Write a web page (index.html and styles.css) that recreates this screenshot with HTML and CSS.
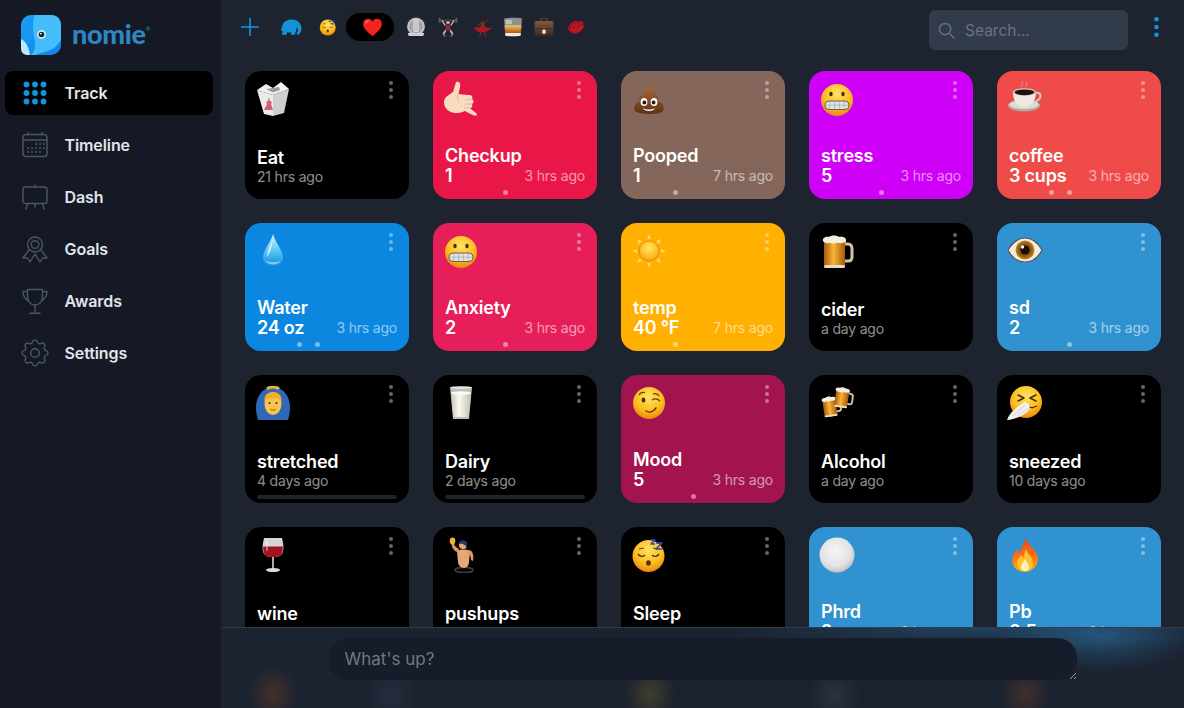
FILE: index.html
```html
<!DOCTYPE html>
<html lang="en">
<head>
<meta charset="utf-8">
<title>Nomie</title>
<link rel="stylesheet" href="styles.css">
</head>
<body>
<svg class="defs" width="0" height="0" aria-hidden="true">
  <defs>
    <radialGradient id="g-face" cx=".5" cy=".32" r=".72"><stop offset="0" stop-color="#ffe266"/><stop offset=".6" stop-color="#fbbd1c"/><stop offset="1" stop-color="#e97d10"/></radialGradient>
    <linearGradient id="g-poop" x1="0" y1="0" x2="0" y2="1"><stop offset="0" stop-color="#a9683a"/><stop offset="1" stop-color="#5e3216"/></linearGradient>
    <linearGradient id="g-drop" x1="0" y1="0" x2="0" y2="1"><stop offset="0" stop-color="#d5f3ff"/><stop offset=".55" stop-color="#4fc0f5"/><stop offset="1" stop-color="#0b7fd8"/></linearGradient>
    <radialGradient id="g-sun" cx=".5" cy=".35" r=".7"><stop offset="0" stop-color="#ffe566"/><stop offset=".7" stop-color="#fbb91e"/><stop offset="1" stop-color="#e98a0c"/></radialGradient>
    <linearGradient id="g-beer" x1="0" y1="0" x2="1" y2="0"><stop offset="0" stop-color="#a9590d"/><stop offset=".45" stop-color="#fbb437"/><stop offset="1" stop-color="#a9590d"/></linearGradient>
    <radialGradient id="g-iris" cx=".5" cy=".5" r=".5"><stop offset="0" stop-color="#4d2a10"/><stop offset=".7" stop-color="#9a5a14"/><stop offset="1" stop-color="#c89012"/></radialGradient>
    <linearGradient id="g-milk" x1="0" y1="0" x2="1" y2="0"><stop offset="0" stop-color="#c9c5b8"/><stop offset=".4" stop-color="#fbf9f0"/><stop offset="1" stop-color="#c4c0b2"/></linearGradient>
    <radialGradient id="g-ball" cx=".45" cy=".4" r=".6"><stop offset="0" stop-color="#f5f5f5"/><stop offset=".7" stop-color="#e3e3e3"/><stop offset="1" stop-color="#c4c4c4"/></radialGradient>
    <linearGradient id="g-fire" x1="0" y1="0" x2="0" y2="1"><stop offset="0" stop-color="#f0421c"/><stop offset=".6" stop-color="#fb7a12"/><stop offset="1" stop-color="#ffb019"/></linearGradient>
    <linearGradient id="g-whisky" x1="0" y1="0" x2="0" y2="1"><stop offset="0" stop-color="#f1c565"/><stop offset="1" stop-color="#a55710"/></linearGradient>
    <linearGradient id="g-case" x1="0" y1="0" x2="0" y2="1"><stop offset="0" stop-color="#7e5a45"/><stop offset="1" stop-color="#41281b"/></linearGradient>
    <linearGradient id="g-logo" x1="0" y1="0" x2="1" y2="1"><stop offset="0" stop-color="#1ba0f7"/><stop offset="1" stop-color="#0f83e8"/></linearGradient>

    <symbol id="e-box" viewBox="0 0 36 36">
      <path d="M2 9 L18 14 L18 35 L9 33Z" fill="#ebebeb"/>
      <path d="M18 14 L34 8 L29 32 L18 35Z" fill="#cfcfcf"/>
      <path d="M2 9 L11 3 L18 7 L26 1 L34 8 L18 14Z" fill="#f2f2f2"/>
      <path d="M11 8 L18 7 L24 6 L25 9 L18 11.5 Z" fill="#9a9a9a"/>
      <path d="M9 29 L12 23 L11 21 L13 20 L14 16 L15 20 L17 21 L16 23 L18 29 Z" fill="#d8606a"/>
    </symbol>

    <symbol id="e-hand" viewBox="0 0 36 36">
      <path d="M13 1 C16 0 18 2 17 6 L15.500 13 C18 13 21 14 26 14 C29 14 30 16 29 18 C31 19 31 22 29 23 C30 25 29 27 27 27 C29 29 32 31 34 33 C34 35 32 35 30 34 C27 33 24 31 22 30 C18 32 12 33 8 31 C3 29 1 25 1 21 C1 16 6 14 10 11 Z" fill="#f7dcc2"/>
      <path d="M15 13 C14 16 14 19 16 21 M22 19 L29 18 M22 23 L29 23 M21 27 L27 27" stroke="#d8b596" stroke-width=".8" fill="none"/>
    </symbol>

    <symbol id="e-poop" viewBox="0 0 36 36">
      <path d="M17 5 C22 7 24 10 23 13 C27 14 28 17 27 20 C32 22 34 26 32 30 C30 34 8 34 4 30 C2 26 4 22 9 20 C7 17 9 14 13 13 C12 10 15 8 17 5Z" fill="url(#g-poop)"/>
      <ellipse cx="13" cy="21" rx="3.4" ry="4" fill="#fff"/><ellipse cx="23" cy="21" rx="3.4" ry="4" fill="#fff"/>
      <circle cx="13.4" cy="21.500" r="1.9" fill="#2a1508"/><circle cx="22.6" cy="21.500" r="1.9" fill="#2a1508"/>
      <path d="M12 27 C15 29 21 29 24 27 C23 31 13 31 12 27Z" fill="#fff"/>
    </symbol>

    <symbol id="e-grimace" viewBox="0 0 36 36">
      <circle cx="18" cy="19" r="16" fill="url(#g-face)"/>
      <ellipse cx="12" cy="13" rx="1.7" ry="2.3" fill="#4a2a0a"/><ellipse cx="24" cy="13" rx="1.7" ry="2.3" fill="#4a2a0a"/>
      <rect x="6" y="20" width="24" height="8.500" rx="4" fill="#e2e2e2" stroke="#55504a" stroke-width=".9"/>
      <path d="M6 24.200 H30 M10.800 20 V28.500 M15.600 20 V28.500 M20.400 20 V28.500 M25.200 20 V28.500" stroke="#969696" stroke-width=".5"/>
    </symbol>

    <symbol id="e-coffee" viewBox="0 0 36 36">
      <ellipse cx="17" cy="24.500" rx="16" ry="6" fill="#b0ada5"/><ellipse cx="17" cy="23.500" rx="14.500" ry="4.600" fill="#dedbd3"/>
      <path d="M6 11 C6 21 11 26 17 26 C23 26 29 21 29 11Z" fill="#ece9e3"/>
      <path d="M28 12 C35 10 36 18 27 21" fill="none" stroke="#d0cdc5" stroke-width="2"/>
      <ellipse cx="17.500" cy="11" rx="11.500" ry="3.800" fill="#cfccc4"/><ellipse cx="17.500" cy="11.300" rx="10" ry="2.900" fill="#1d120c"/>
      <path d="M15 6 C13 4 17 3 15 0 M19 6 C18 4 21 3 19.500 1" stroke="#ffffff" stroke-opacity=".35" fill="none"/>
    </symbol>

    <symbol id="e-drop" viewBox="0 0 36 36">
      <path d="M18 1 C20 9 28 17 28 25 C28 31 23 35 18 35 C13 35 8 31 8 25 C8 17 16 9 18 1Z" fill="url(#g-drop)"/>
      <path d="M18 5 C17 11 12 18 12 24 C15 20 17 14 18 5Z" fill="#fff" fill-opacity=".75"/>
      <path d="M10 27 C12 33 24 33 26 27 C24 30 12 30 10 27Z" fill="#a6e6ff" fill-opacity=".7"/>
    </symbol>

    <symbol id="e-sun" viewBox="0 0 36 36">
      <g fill="#ffd96a">
        <path d="M18 1 L20 6 H16Z"/><path d="M18 35 L20 30 H16Z"/><path d="M1 18 L6 16 V20Z"/><path d="M35 18 L30 16 V20Z"/>
        <path d="M6 6 L11 8 L8 11Z"/><path d="M30 6 L25 8 L28 11Z"/><path d="M6 30 L11 28 L8 25Z"/><path d="M30 30 L25 28 L28 25Z"/>
      </g>
      <circle cx="18" cy="18" r="10" fill="url(#g-sun)" stroke="#e8840e" stroke-width=".8"/>
    </symbol>

    <symbol id="e-beer" viewBox="0 0 36 36">
      <path d="M24 11 H29 C32 11 33 13 33 16 V24 C33 27 31 28 29 28 H24" fill="none" stroke="#cfc3a8" stroke-width="3"/>
      <rect x="5" y="7" width="21" height="28" rx="3" fill="url(#g-beer)"/>
      <rect x="5" y="32" width="21" height="3" rx="1.5" fill="#e7dcc4"/>
      <path d="M4 8 C3 5 7 3 10 4 C12 2 18 2 20 4 C24 3 28 5 27 8 C27 10 25 10 24 9.500 C22 11 20 10 18 9.500 C16 11 12 11 11 9.500 C9 11 5 10 4 8Z" fill="#f6efdf"/>
    </symbol>

    <symbol id="e-eye" viewBox="0 0 36 36">
      <path d="M1 17 C6 9 12 5 18 5 C25 5 31 10 35 17 C31 25 25 29 18 29 C11 29 5 25 1 17Z" fill="#f0ece8" stroke="#5f504a" stroke-width="1.2"/>
      <circle cx="18" cy="17" r="9.500" fill="url(#g-iris)"/><circle cx="18" cy="17" r="4.600" fill="#15100c"/><circle cx="15.500" cy="14" r="1.700" fill="#fff"/>
    </symbol>

    <symbol id="e-person" viewBox="0 0 36 36">
      <path d="M3 35 C-1 22 1 11 9 5 C13 2 23 2 27 5 C35 11 37 22 33 35Z" fill="#2f68b5"/>
      <path d="M11 3 C13 0 23 0 25 3 L23 5 C20 3 16 3 13 5Z" fill="#e9b04a"/>
      <ellipse cx="18" cy="19" rx="8.500" ry="11" fill="#fbc450"/>
      <path d="M9.500 16 C9 9 14 7 18 7 C22 7 27 9 26.500 16 C24 12 12 12 9.500 16Z" fill="#f2ae2c"/>
      <circle cx="14.500" cy="18" r="1" fill="#3c2308"/><circle cx="21.500" cy="18" r="1" fill="#3c2308"/>
      <path d="M15 24 C16.500 25.500 19.500 25.500 21 24" stroke="#a5541a" stroke-width="1" fill="none"/>
      <path d="M10 35 C11 32 14 31 18 31 C22 31 25 32 26 35Z" fill="#2f68b5"/>
    </symbol>

    <symbol id="e-milk" viewBox="0 0 36 36">
      <path d="M7 2 H29 L26 34 H10Z" fill="#bdbdba"/>
      <path d="M8 8 H28 L25.500 32 H10.500Z" fill="url(#g-milk)"/>
      <ellipse cx="18" cy="8" rx="10" ry="1.800" fill="#fdfcf6"/>
      <ellipse cx="18" cy="2.600" rx="11" ry="1.400" fill="#e5e5e2"/>
    </symbol>

    <symbol id="e-wink" viewBox="0 0 36 36">
      <circle cx="18" cy="18" r="16" fill="url(#g-face)"/>
      <ellipse cx="12.500" cy="15" rx="1.900" ry="2.600" fill="#4a2a0a"/>
      <path d="M8 10 C9 8 11 7 14 7.500" stroke="#6b3a0a" stroke-width="1.200" fill="none"/>
      <path d="M21 15 C24 13 27 14 29 16 M22 9 C24 8 27 9 28 11" stroke="#6b3a0a" stroke-width="1.300" fill="none"/>
      <path d="M15 26 C18 28 22 27 25 23" stroke="#5a2f0a" stroke-width="1.500" fill="none" stroke-linecap="round"/>
    </symbol>

    <symbol id="e-beers" viewBox="0 0 36 36">
      <g transform="rotate(-8 10 20) translate(1 10) scale(.62)"><use href="#e-beer" width="36" height="36"/></g>
      <g transform="rotate(8 24 14) translate(13 1) scale(.62)"><use href="#e-beer" width="36" height="36"/></g>
    </symbol>

    <symbol id="e-sneeze" viewBox="0 0 36 36">
      <circle cx="19" cy="17" r="16" fill="url(#g-face)"/>
      <path d="M11 10 L17 13 L11 16 M29 10 L23 13 L29 16" stroke="#4a2a0a" stroke-width="1.500" fill="none" stroke-linecap="round" stroke-linejoin="round"/>
      <path d="M22 23 C24 21 25 24 27 22 C28 21 29 22 30 21" stroke="#5a2f0a" stroke-width="1.200" fill="none"/>
      <path d="M0 35 C2 29 8 23 17 17 C21 17 24 21 22 25 C18 30 10 34 0 35Z" fill="#f1f0ed"/>
      <path d="M6 31 L18 20 M11 31 L21 23" stroke="#c3c1bc" stroke-width=".7"/>
    </symbol>

    <symbol id="e-wine" viewBox="0 0 36 36">
      <path d="M9 1 H27 C29 9 29 15 26 18 C23 21 13 21 10 18 C7 15 7 9 9 1Z" fill="#d8d4d4"/>
      <path d="M8.200 9.500 H27.800 C28 14 27 16 26 18 C23 21 13 21 10 18 C9 16 8 14 8.200 9.500Z" fill="#a41220"/>
      <path d="M12 4 V14" stroke="#fff" stroke-opacity=".6" stroke-width="1.200"/>
      <rect x="17.200" y="20" width="1.600" height="12" fill="#d5d5d5"/>
      <ellipse cx="18" cy="33" rx="7" ry="2" fill="#dcdcdc"/>
    </symbol>

    <symbol id="e-pushups" viewBox="0 0 36 36">
      <ellipse cx="21" cy="33" rx="9" ry="2.600" fill="none" stroke="#3d3d3d" stroke-width="1.800"/>
      <path d="M14 14 C16 12 25 12 27 14 L26 25 C26 28 24 31 21 31 C18 31 15 28 15 25Z" fill="#e5a678"/>
      <path d="M27 13 C30 15 31 19 30 24 L28 23 C28 20 27 18 25 16Z" fill="#d9976a"/>
      <path d="M14 15 C10 13 8 9 9 6 L11 6 C11 9 13 10 16 12Z" fill="#d9976a"/>
      <ellipse cx="9.500" cy="4" rx="2.800" ry="3.400" fill="#e9bb2b"/>
      <circle cx="20" cy="8" r="4" fill="#e5a678"/><path d="M16 7 C16 2 24 2 24 7 L24 12 C23 9 21 6 16 7Z" fill="#2a3570"/>
    </symbol>

    <symbol id="e-sleep" viewBox="0 0 36 36">
      <circle cx="17.500" cy="19" r="16" fill="url(#g-face)"/>
      <path d="M7 17 C9 20 12 20 14 18 M21 18 C23 20 26 20 28 17" stroke="#5a3209" stroke-width="1.400" fill="none"/>
      <path d="M8 12 L13 11 M22 11 L27 12" stroke="#6b3a0a" stroke-width="1.200"/>
      <ellipse cx="17.500" cy="26" rx="2.400" ry="2.800" fill="#5a3209"/>
      <path d="M20 3 H24 L20 7 H24 M25 6 H31 L25 12 H31" stroke="#2a4bb8" stroke-width="1.600" fill="none" stroke-linejoin="round"/>
    </symbol>

    <symbol id="e-white" viewBox="0 0 36 36"><circle cx="18" cy="18" r="17.500" fill="url(#g-ball)"/></symbol>

    <symbol id="e-fire" viewBox="0 0 36 36">
      <path d="M19 1 C20 7 27 11 30 17 C33 24 29 34 18 35 C8 35 3 26 6 19 C7 16 9 15 10 12 C12 14 12 16 13 16 C14 11 17 6 19 1Z" fill="url(#g-fire)"/>
      <path d="M19 12 C20 17 26 20 26 26 C26 31 22 34 18 34 C14 34 10 31 10 26 C10 22 13 21 14 18 C15 20 16 21 16 21 C17 18 18 15 19 12Z" fill="#ffc22e"/>
      <path d="M18 22 C19 25 22 27 22 30 C22 33 20 34 18 34 C16 34 14 33 14 30 C14 27 17 25 18 22Z" fill="#fff3b8"/>
    </symbol>

    <symbol id="e-heart" viewBox="0 0 36 36">
      <path d="M18 33 C10 26 2 20 2 12 C2 6 6 3 10.500 3 C14 3 16.800 5 18 8 C19.200 5 22 3 25.500 3 C30 3 34 6 34 12 C34 20 26 26 18 33Z" fill="#f5231f"/>
      <path d="M6 9 C8 6 12 6 13 7 C10 8 8 10 7 13Z" fill="#ff8b80"/>
    </symbol>

    <symbol id="e-dial" viewBox="0 0 36 36">
      <circle cx="18" cy="17" r="16" fill="#c3c3c3"/><circle cx="18" cy="17" r="12.500" fill="#a3a3a3"/>
      <rect x="13" y="5" width="10" height="22" rx="3" fill="#dcdcdc"/>
      <path d="M16 7 V25 M20 7 V25" stroke="#8e8e8e" stroke-width="1"/>
      <path d="M3 29 H33 L31 34 H5Z" fill="#d1d1d1"/>
    </symbol>

    <symbol id="e-lifter" viewBox="0 0 36 36">
      <path d="M1 6 H35" stroke="#6a6a6a" stroke-width="1.600"/>
      <path d="M3 1 V11 M33 1 V11" stroke="#5c5c5c" stroke-width="3"/>
      <path d="M7 6 L13 15 M29 6 L23 15" stroke="#e5b690" stroke-width="2.400"/>
      <circle cx="18" cy="9" r="3.600" fill="#e5b690"/><path d="M14 8 C14 3 22 3 22 8Z" fill="#4a3426"/>
      <path d="M13 14 H23 L22 24 H14Z" fill="#7a2d5f"/>
      <path d="M14 24 L10 30 L12 35 M22 24 L26 30 L24 35" stroke="#e5b690" stroke-width="3" fill="none"/>
      <path d="M9 31 L13 35 M27 31 L23 35" stroke="#4a4a70" stroke-width="2.400"/>
    </symbol>

    <symbol id="e-dancer" viewBox="0 0 36 36">
      <circle cx="17" cy="5" r="3.200" fill="#3a2016"/>
      <path d="M15 9 H20 L21 18 H14Z" fill="#6e3a24"/>
      <path d="M20 10 L27 5 M15 10 L8 16" stroke="#6e3a24" stroke-width="1.800"/>
      <path d="M14 17 C10 20 4 19 1 17 C3 25 10 27 16 28 C22 27 30 25 35 19 C28 21 24 19 21 17Z" fill="#b5161c"/>
      <path d="M14 27 L12 35 M20 27 L23 35" stroke="#6e3a24" stroke-width="2"/>
    </symbol>

    <symbol id="e-whisky" viewBox="0 0 36 36">
      <path d="M2 3 C2 1 34 1 34 3 L32 33 C32 36 4 36 4 33Z" fill="#8f8f8d"/>
      <path d="M3 15 H33 L32 29 H4Z" fill="url(#g-whisky)"/>
      <path d="M5 5 H16 V13 H5Z" fill="#e0e0dd" fill-opacity=".6"/>
      <rect x="4" y="29" width="28" height="5" rx="2" fill="#ecebe6"/>
    </symbol>

    <symbol id="e-case" viewBox="0 0 36 36">
      <path d="M12 8 V3 H24 V8" fill="none" stroke="#5a3f30" stroke-width="2.400"/>
      <rect x="1" y="7" width="34" height="27" rx="3" fill="url(#g-case)"/>
      <rect x="15" y="23" width="6" height="7" rx="1" fill="#e9e9e9"/>
      <path d="M1 21 H15 M21 21 H35" stroke="#2b1a10" stroke-width="1"/>
    </symbol>

    <symbol id="e-kiss" viewBox="0 0 36 36">
      <path d="M1 21 C6 12 12 5 18 6 C21 7 22 8 23 7 C27 4 32 8 35 13 C34 20 28 29 18 31 C11 32 5 28 1 21Z" fill="#b5121e"/>
      <path d="M4 21 C12 20 22 17 33 13" stroke="#5a070d" stroke-width="1.400" fill="none"/>
      <path d="M8 25 L14 15 M14 28 L20 13 M21 28 L26 12 M27 24 L30 14" stroke="#e65860" stroke-width=".7"/>
    </symbol>

    <symbol id="kebab" viewBox="0 0 4 18"><circle cx="2" cy="2" r="2"/><circle cx="2" cy="9" r="2"/><circle cx="2" cy="16" r="2"/></symbol>
  </defs>
</svg>

<div class="app">
  <aside class="sidebar">
    <div class="brand">
      <svg class="logo" viewBox="0 0 40 40" aria-hidden="true">
        <rect width="40" height="40" rx="10" fill="url(#g-logo)"/>
        <path d="M0 24 C6 27 8 34 9 40 H6 C3 40 0 37 0 34Z" fill="#bfe6ff"/>
        <path d="M14 0 H30 C36 0 40 4 40 10 V25 C36 31 33 34 27 36 C22 38 18 38 14 40 H10 C16 34 14 28 13 22 C12 14 11 6 14 0Z" fill="#45bdfb"/>
        <circle cx="20.500" cy="19.500" r="4.400" fill="#d8f0fb"/><circle cx="20.500" cy="19.500" r="2.800" fill="#123"/><circle cx="19.800" cy="18.600" r=".9" fill="#fff"/>
      </svg>
      <span class="wordmark">nomie<sup class="reg">®</sup></span>
    </div>
    <nav class="nav">
      <a class="nav-item active">
        <svg class="nav-icon" viewBox="0 0 26 26" aria-hidden="true">
          <circle cx="4.500" cy="4.500" r="2.900"/><circle cx="13" cy="4.500" r="2.900"/><circle cx="21.500" cy="4.500" r="2.900"/>
          <circle cx="4.500" cy="13" r="2.900"/><circle cx="13" cy="13" r="2.900"/><circle cx="21.500" cy="13" r="2.900"/>
          <circle cx="4.500" cy="21.500" r="2.900"/><circle cx="13" cy="21.500" r="2.900"/><circle cx="21.500" cy="21.500" r="2.900"/>
        </svg>
        <span>Track</span>
      </a>
      <a class="nav-item">
        <svg class="nav-icon" viewBox="0 0 26 26" aria-hidden="true">
          <rect x="1" y="2.500" width="24" height="22" rx="3"/><path d="M1 8 H25 M6 .5 V3 M20 .5 V3"/>
          <g class="fill"><circle cx="14" cy="12" r="1"/><circle cx="18" cy="12" r="1"/><circle cx="22" cy="12" r="1"/><circle cx="6" cy="16" r="1"/><circle cx="10" cy="16" r="1"/><circle cx="14" cy="16" r="1"/><circle cx="18" cy="16" r="1"/><circle cx="22" cy="16" r="1"/><circle cx="6" cy="20" r="1"/><circle cx="10" cy="20" r="1"/><circle cx="14" cy="20" r="1"/><circle cx="18" cy="20" r="1"/></g>
        </svg>
        <span>Timeline</span>
      </a>
      <a class="nav-item">
        <svg class="nav-icon" viewBox="0 0 26 26" aria-hidden="true">
          <rect x="1" y="3" width="24" height="16.500" rx="2.500"/><path d="M13 1 V3 M5.500 19.500 L4 25 M20.500 19.500 L22 25 M13 19.500 V23"/>
        </svg>
        <span>Dash</span>
      </a>
      <a class="nav-item">
        <svg class="nav-icon" viewBox="0 0 26 26" aria-hidden="true">
          <circle cx="13" cy="8.500" r="7.500"/><circle cx="13" cy="8.500" r="3.800"/>
          <path d="M7 14 L1 22 L5.500 22 L8 26 L13 18 L18 26 L20.500 22 L25 22 L19 14"/>
        </svg>
        <span>Goals</span>
      </a>
      <a class="nav-item">
        <svg class="nav-icon" viewBox="0 0 26 26" aria-hidden="true">
          <path d="M5.500 1.500 H20.500 V9 C20.500 14 17 17 13 17 C9 17 5.500 14 5.500 9Z"/>
          <path d="M5.500 3.500 H1 C1 8 3 11 6.500 12.500 M20.500 3.500 H25 C25 8 23 11 19.500 12.500 M13 17 V25 M8 25.300 H18"/>
        </svg>
        <span>Awards</span>
      </a>
      <a class="nav-item">
        <svg class="nav-icon" viewBox="3 3 18 18" aria-hidden="true">
          <path class="thin" d="M10.325 4.317c.426-1.756 2.924-1.756 3.35 0a1.724 1.724 0 002.573 1.066c1.543-.94 3.31.826 2.37 2.37a1.724 1.724 0 001.065 2.572c1.756.426 1.756 2.924 0 3.35a1.724 1.724 0 00-1.066 2.573c.94 1.543-.826 3.31-2.37 2.37a1.724 1.724 0 00-2.572 1.065c-.426 1.756-2.924 1.756-3.35 0a1.724 1.724 0 00-2.573-1.066c-1.543.94-3.31-.826-2.37-2.37a1.724 1.724 0 00-1.065-2.572c-1.756-.426-1.756-2.924 0-3.35a1.724 1.724 0 001.066-2.573c-.94-1.543.826-3.31 2.37-2.37.996.608 2.296.07 2.572-1.065z"/>
          <circle class="thin" cx="12" cy="12" r="3"/>
        </svg>
        <span>Settings</span>
      </a>
    </nav>
  </aside>

  <main class="main">
    <header class="topbar">
      <div class="tabs">
        <svg class="tab plus" viewBox="0 0 18 18" aria-hidden="true"><path d="M9 0 V18 M0 9 H18"/></svg>
        <svg class="tab elephant" viewBox="0 0 24 18" aria-hidden="true"><path d="M2 17 L3 13 L1 12 C2 8 3 3 7 1.500 C12 -.5 19 0 22 5 C24 9 24 13 21 16 C19 18 17 16 19 14 C20 12 19 9 18 9 C18 12 17 15 16 17 H12 L12 14 C10 15 9 15 8 14 L7 17Z"/></svg>
        <svg class="tab ic18"><use href="#e-sleep"/></svg>
        <span class="tab pill"><svg class="ic21"><use href="#e-heart"/></svg></span>
        <svg class="tab ic20"><use href="#e-dial"/></svg>
        <svg class="tab ic20"><use href="#e-lifter"/></svg>
        <svg class="tab ic20"><use href="#e-dancer"/></svg>
        <svg class="tab ic20"><use href="#e-whisky"/></svg>
        <svg class="tab ic20"><use href="#e-case"/></svg>
        <svg class="tab ic18"><use href="#e-kiss"/></svg>
      </div>
      <label class="search">
        <svg class="search-icon" viewBox="0 0 18 18" aria-hidden="true"><circle cx="7.500" cy="7.500" r="6"/><path d="M12 12 L17 17"/></svg>
        <input class="search-input" type="text" placeholder="Search...">
      </label>
      <svg class="top-kebab" aria-hidden="true"><use href="#kebab"/></svg>
    </header>

    <section class="grid">
      <article class="card c-black">
        <div class="card-top"><svg class="emoji"><use href="#e-box"/></svg><svg class="more"><use href="#kebab"/></svg></div>
        <div class="body"><div class="title">Eat</div><div class="row"><span class="ago">21 hrs ago</span></div></div>
      </article>
      <article class="card c-checkup">
        <div class="card-top"><svg class="emoji"><use href="#e-hand"/></svg><svg class="more"><use href="#kebab"/></svg></div>
        <div class="body valued"><div class="title">Checkup</div><div class="row"><span class="val">1</span><span class="ago">3 hrs ago</span></div></div>
        <i class="dot d72"></i>
      </article>
      <article class="card c-pooped">
        <div class="card-top"><svg class="emoji"><use href="#e-poop"/></svg><svg class="more"><use href="#kebab"/></svg></div>
        <div class="body valued"><div class="title">Pooped</div><div class="row"><span class="val">1</span><span class="ago">7 hrs ago</span></div></div>
        <i class="dot d54"></i>
      </article>
      <article class="card c-stress">
        <div class="card-top"><svg class="emoji"><use href="#e-grimace"/></svg><svg class="more"><use href="#kebab"/></svg></div>
        <div class="body valued"><div class="title">stress</div><div class="row"><span class="val">5</span><span class="ago">3 hrs ago</span></div></div>
        <i class="dot d72"></i>
      </article>
      <article class="card c-coffee">
        <div class="card-top"><svg class="emoji"><use href="#e-coffee"/></svg><svg class="more"><use href="#kebab"/></svg></div>
        <div class="body valued"><div class="title">coffee</div><div class="row"><span class="val">3 cups</span><span class="ago">3 hrs ago</span></div></div>
        <i class="dot d54"></i><i class="dot d72"></i>
      </article>

      <article class="card c-water">
        <div class="card-top"><svg class="emoji"><use href="#e-drop"/></svg><svg class="more"><use href="#kebab"/></svg></div>
        <div class="body valued"><div class="title">Water</div><div class="row"><span class="val">24 oz</span><span class="ago">3 hrs ago</span></div></div>
        <i class="dot d54"></i><i class="dot d72"></i>
      </article>
      <article class="card c-anxiety">
        <div class="card-top"><svg class="emoji"><use href="#e-grimace"/></svg><svg class="more"><use href="#kebab"/></svg></div>
        <div class="body valued"><div class="title">Anxiety</div><div class="row"><span class="val">2</span><span class="ago">3 hrs ago</span></div></div>
        <i class="dot d72"></i>
      </article>
      <article class="card c-temp">
        <div class="card-top"><svg class="emoji"><use href="#e-sun"/></svg><svg class="more"><use href="#kebab"/></svg></div>
        <div class="body valued"><div class="title">temp</div><div class="row"><span class="val">40 °F</span><span class="ago">7 hrs ago</span></div></div>
        <i class="dot d54"></i>
      </article>
      <article class="card c-black">
        <div class="card-top"><svg class="emoji"><use href="#e-beer"/></svg><svg class="more"><use href="#kebab"/></svg></div>
        <div class="body"><div class="title">cider</div><div class="row"><span class="ago">a day ago</span></div></div>
      </article>
      <article class="card c-blue">
        <div class="card-top"><svg class="emoji"><use href="#e-eye"/></svg><svg class="more"><use href="#kebab"/></svg></div>
        <div class="body valued"><div class="title">sd</div><div class="row"><span class="val">2</span><span class="ago">3 hrs ago</span></div></div>
        <i class="dot d72"></i>
      </article>

      <article class="card c-black">
        <div class="card-top"><svg class="emoji"><use href="#e-person"/></svg><svg class="more"><use href="#kebab"/></svg></div>
        <div class="body"><div class="title">stretched</div><div class="row"><span class="ago">4 days ago</span></div></div>
        <i class="progress"></i>
      </article>
      <article class="card c-black">
        <div class="card-top"><svg class="emoji"><use href="#e-milk"/></svg><svg class="more"><use href="#kebab"/></svg></div>
        <div class="body"><div class="title">Dairy</div><div class="row"><span class="ago">2 days ago</span></div></div>
        <i class="progress"></i>
      </article>
      <article class="card c-mood">
        <div class="card-top"><svg class="emoji"><use href="#e-wink"/></svg><svg class="more"><use href="#kebab"/></svg></div>
        <div class="body valued"><div class="title">Mood</div><div class="row"><span class="val">5</span><span class="ago">3 hrs ago</span></div></div>
        <i class="dot d72"></i>
      </article>
      <article class="card c-black">
        <div class="card-top"><svg class="emoji"><use href="#e-beers"/></svg><svg class="more"><use href="#kebab"/></svg></div>
        <div class="body"><div class="title">Alcohol</div><div class="row"><span class="ago">a day ago</span></div></div>
      </article>
      <article class="card c-black">
        <div class="card-top"><svg class="emoji"><use href="#e-sneeze"/></svg><svg class="more"><use href="#kebab"/></svg></div>
        <div class="body"><div class="title">sneezed</div><div class="row"><span class="ago">10 days ago</span></div></div>
      </article>

      <article class="card c-black">
        <div class="card-top"><svg class="emoji"><use href="#e-wine"/></svg><svg class="more"><use href="#kebab"/></svg></div>
        <div class="body"><div class="title">wine</div></div>
      </article>
      <article class="card c-black">
        <div class="card-top"><svg class="emoji"><use href="#e-pushups"/></svg><svg class="more"><use href="#kebab"/></svg></div>
        <div class="body"><div class="title">pushups</div></div>
      </article>
      <article class="card c-black">
        <div class="card-top"><svg class="emoji"><use href="#e-sleep"/></svg><svg class="more"><use href="#kebab"/></svg></div>
        <div class="body"><div class="title">Sleep</div></div>
      </article>
      <article class="card c-blue">
        <div class="card-top"><svg class="emoji"><use href="#e-white"/></svg><svg class="more"><use href="#kebab"/></svg></div>
        <div class="body valued"><div class="title">Phrd</div><div class="row"><span class="val">2</span><span class="ago">3 hrs ago</span></div></div>
      </article>
      <article class="card c-blue">
        <div class="card-top"><svg class="emoji"><use href="#e-fire"/></svg><svg class="more"><use href="#kebab"/></svg></div>
        <div class="body valued"><div class="title">Pb</div><div class="row"><span class="val">0.5</span><span class="ago">3 hrs ago</span></div></div>
      </article>
    </section>

    <div class="composer">
      <textarea class="note" placeholder="What's up?"></textarea>
    </div>
  </main>
</div>
</body>
</html>
```

FILE: styles.css
```css
* { box-sizing: border-box; }

html, body {
  margin: 0;
  height: 100%;
  overflow: hidden;
}

body {
  background: #1d2430;
  color: #fff;
  font-family: Inter, "Liberation Sans", sans-serif;
}

.defs { position: absolute; }

.app {
  display: flex;
  height: 100vh;
}

/* Sidebar */
.sidebar {
  flex: 0 0 221px;
  background: #141925;
  padding: 15px 8px 0 5px;
}

.brand {
  display: flex;
  align-items: center;
  gap: 11px;
  height: 40px;
  padding-left: 16px;
  margin-bottom: 16px;
}

.logo { width: 40px; height: 40px; flex: none; }

.wordmark {
  font-family: Lato, "Open Sans", sans-serif;
  font-size: 27px;
  font-weight: 900;
  line-height: 38px;
  letter-spacing: -.3px;
  margin-bottom: 3px;
  color: #2d86c4;
}

.reg {
  font-size: 6px;
  font-weight: 400;
  vertical-align: 13px;
  line-height: 0;
  letter-spacing: 0;
}

.nav {
  display: flex;
  flex-direction: column;
  gap: 8px;
}

.nav-item {
  display: flex;
  align-items: center;
  gap: 16.5px;
  height: 44px;
  padding-left: 17px;
  border-radius: 8px;
  font-size: 16px;
  font-weight: 600;
  letter-spacing: -.1px;
  color: #e2e5ea;
}

.nav-item.active { background: #000; }

.nav-icon {
  width: 26px;
  height: 26px;
  flex: none;
  overflow: visible;
  fill: none;
  stroke: #4c5563;
  stroke-width: 1.4;
  stroke-linejoin: round;
  stroke-linecap: round;
}

.nav-item.active .nav-icon { stroke: none; fill: #0f97e4; }
.nav-icon .fill { fill: #4c5563; stroke: none; }
.nav-icon .thin { stroke-width: 1; }

/* Main */
.main {
  position: relative;
  flex: 1;
  min-width: 0;
  height: 100vh;
  overflow: hidden;
  display: flex;
  flex-direction: column;
}

.topbar {
  flex: 0 0 60px;
  display: flex;
  align-items: center;
  padding: 0 25px 0 20px;
}

.tabs {
  display: flex;
  align-items: center;
  flex: 1;
  margin-bottom: 6px;
}

.tab { flex: none; }
.ic18 { width: 18px; height: 18px; display: block; }
.ic20 { width: 20px; height: 20px; display: block; }
.ic21 { width: 21px; height: 21px; display: block; }

.plus {
  width: 18px;
  height: 18px;
  fill: none;
  stroke: #0f97e4;
  stroke-width: 1.6;
}

.elephant {
  width: 22px;
  height: 17px;
  margin-left: 21px;
  fill: #1591d8;
}

.tabs > :nth-child(3) { margin-left: 17px; }

.pill {
  display: flex;
  align-items: center;
  justify-content: center;
  width: 48px;
  height: 28px;
  margin-left: 9px;
  background: #000;
  border-radius: 14px;
}

.pill svg { margin-left: 4px; }

.tabs > :nth-child(5) { margin-left: 12px; }
.tabs > :nth-child(6) { margin-left: 12px; }
.tabs > :nth-child(7) { margin-left: 15px; }
.tabs > :nth-child(8) { margin-left: 10px; }
.tabs > :nth-child(9) { margin-left: 11px; }
.tabs > :nth-child(10) { margin-left: 13px; }

.search {
  display: flex;
  align-items: center;
  gap: 8px;
  width: 199px;
  height: 40px;
  padding-left: 9px;
  background: #323b49;
  border-radius: 6px;
}

.search-icon {
  width: 17px;
  height: 17px;
  flex: none;
  fill: none;
  stroke: #687080;
  stroke-width: 1.6;
  stroke-linecap: round;
}

.search-input {
  min-width: 0;
  flex: 1;
  border: 0;
  outline: 0;
  background: none;
  font: 400 15.5px Inter, "Liberation Sans", sans-serif;
  color: #fff;
}

.search-input::placeholder { color: #6b7280; opacity: 1; }

.top-kebab {
  flex: none;
  width: 5px;
  height: 20px;
  margin-left: 26px;
  margin-bottom: 6px;
  fill: #0f97e4;
}

/* Tracker grid */
.grid {
  display: grid;
  grid-template-columns: repeat(5, 164px);
  grid-auto-rows: 128px;
  gap: 24px;
  padding: 11px 24px 0;
}

.card {
  position: relative;
  display: flex;
  flex-direction: column;
  padding: 10px 12px 0;
  border-radius: 16px;
  overflow: hidden;
  letter-spacing: -.2px;
}

.c-black { background: #000; }
.c-checkup { background: #e91747; }
.c-pooped { background: #84675a; }
.c-stress { background: #cf00f7; }
.c-coffee { background: #ef4b49; }
.c-water { background: #0b87e0; }
.c-anxiety { background: #e61f5b; }
.c-temp { background: #ffb000; }
.c-blue { background: #3092d0; }
.c-mood { background: #a3144e; }

.card-top {
  display: flex;
  justify-content: space-between;
  margin-left: -2px;
}

.emoji { width: 36px; height: 36px; flex: none; }

.more {
  flex: none;
  width: 4px;
  height: 18px;
  margin-right: 4px;
  fill: #fff;
  opacity: .4;
}

.body { margin-top: 31px; }
.body.valued { margin-top: 29px; }

.title {
  font-size: 18px;
  font-weight: 600;
  line-height: 20px;
}

.row {
  display: flex;
  justify-content: space-between;
  align-items: center;
}

.val {
  font-size: 18px;
  font-weight: 600;
  line-height: 20px;
}

.ago {
  font-size: 14px;
  line-height: 18px;
  opacity: .55;
}

.dot {
  position: absolute;
  top: 119px;
  width: 5px;
  height: 5px;
  border-radius: 50%;
  background: #fff;
  opacity: .45;
}

.d54 { left: 52px; }
.d72 { left: 70px; }

.progress {
  position: absolute;
  left: 12px;
  right: 12px;
  bottom: 4px;
  height: 4px;
  border-radius: 2px;
  background: #1d2430;
}

/* Composer floats over the scrolled grid; the gradients stand in for
   the blurred cards that scroll underneath it */
.composer {
  position: absolute;
  left: 0;
  right: 0;
  bottom: 0;
  height: 81px;
  padding-top: 10px;
  display: flex;
  justify-content: center;
  align-items: flex-start;
  border-top: 1px solid #343b47;
  background:
    radial-gradient(ellipse 100px 36px at 880px 8px, rgba(48, 146, 208, .38), transparent),
    radial-gradient(ellipse 260px 26px at 760px 0, rgba(48, 146, 208, .28), transparent),
    radial-gradient(ellipse 26px 30px at 52px 66px, rgba(150, 80, 30, .32), transparent),
    radial-gradient(ellipse 26px 30px at 170px 68px, rgba(90, 100, 120, .16), transparent),
    radial-gradient(ellipse 26px 30px at 429px 66px, rgba(140, 120, 40, .32), transparent),
    radial-gradient(ellipse 26px 30px at 614px 68px, rgba(110, 110, 125, .2), transparent),
    radial-gradient(ellipse 26px 30px at 804px 66px, rgba(150, 80, 30, .3), transparent),
    #1b2230;
}

.note {
  display: block;
  width: 748px;
  height: 42px;
  padding: 10px 16px;
  border: 0;
  outline: 0;
  border-radius: 20px;
  background: #161c29;
  color: #fff;
  font: 400 17px/22px Inter, "Liberation Sans", sans-serif;
  resize: both;
}

.note::placeholder { color: #727884; opacity: 1; }
```
